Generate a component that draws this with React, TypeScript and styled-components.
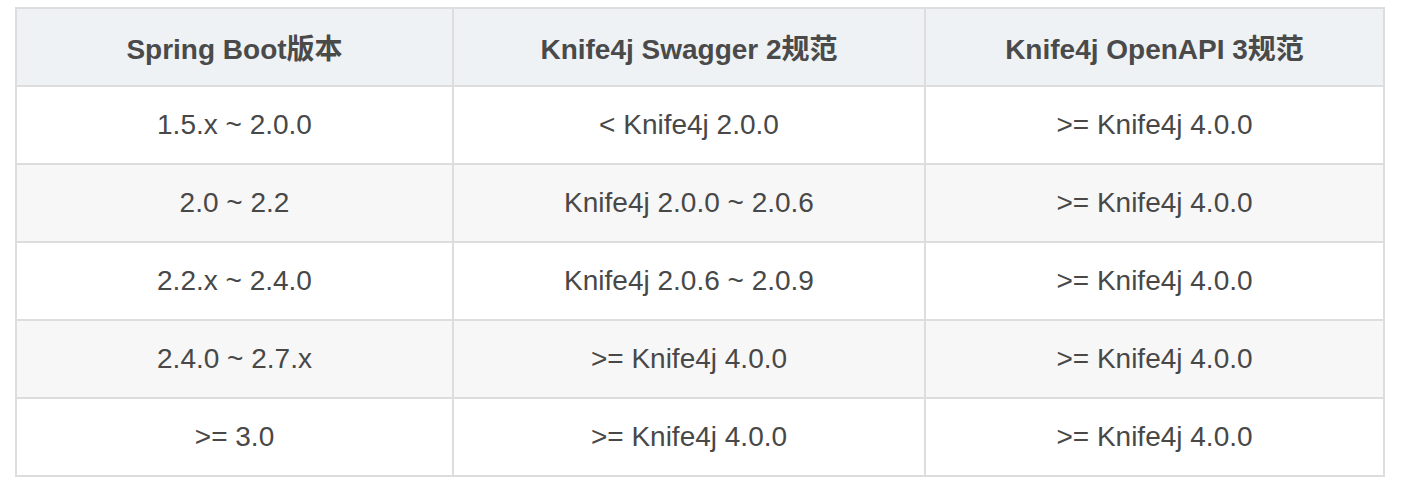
import styled, { createGlobalStyle } from "styled-components";

const GlobalStyle = createGlobalStyle`
  html, body {
    margin: 0;
    padding: 0;
    background: #ffffff;
  }
  body {
    font-family: "Liberation Sans", Arial, "Noto Sans CJK SC", sans-serif;
    color: #484848;
  }
`;

const Page = styled.div`
  padding: 7px 0 0 15px;
`;

const Table = styled.table`
  width: 1370px;
  table-layout: fixed;
  border-collapse: collapse;
  font-size: 28px;
`;

const HeadCell = styled.th`
  height: 76px;
  padding: 0 12px;
  border: 2px solid #dddddd;
  background: #eef2f5;
  font-weight: bold;
  text-align: center;
  color: #4a4a4a;
`;

const Row = styled.tr<{ $striped: boolean }>`
  background: ${(p) => (p.$striped ? "#f7f7f7" : "#ffffff")};
`;

const Cell = styled.td`
  height: 76px;
  padding: 0 12px;
  border: 2px solid #dddddd;
  text-align: center;
  color: #484848;
`;

const columns = ["Spring Boot版本", "Knife4j Swagger 2规范", "Knife4j OpenAPI 3规范"];
const widths = [437, 472, 459];

const rows = [
  ["1.5.x ~ 2.0.0", "< Knife4j 2.0.0", ">= Knife4j 4.0.0"],
  ["2.0 ~ 2.2", "Knife4j 2.0.0 ~ 2.0.6", ">= Knife4j 4.0.0"],
  ["2.2.x ~ 2.4.0", "Knife4j 2.0.6 ~ 2.0.9", ">= Knife4j 4.0.0"],
  ["2.4.0 ~ 2.7.x", ">= Knife4j 4.0.0", ">= Knife4j 4.0.0"],
  [">= 3.0", ">= Knife4j 4.0.0", ">= Knife4j 4.0.0"],
];

export default function App() {
  return (
    <>
      <GlobalStyle />
      <Page>
        <Table>
          <colgroup>
            {widths.map((w, i) => (
              <col key={i} style={{ width: w }} />
            ))}
          </colgroup>
          <thead>
            <tr>
              {columns.map((c) => (
                <HeadCell key={c}>{c}</HeadCell>
              ))}
            </tr>
          </thead>
          <tbody>
            {rows.map((r, i) => (
              <Row key={i} $striped={i % 2 === 1}>
                {r.map((v, j) => (
                  <Cell key={j}>{v}</Cell>
                ))}
              </Row>
            ))}
          </tbody>
        </Table>
      </Page>
    </>
  );
}
